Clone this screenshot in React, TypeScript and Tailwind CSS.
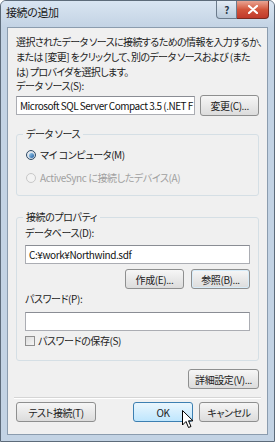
import React from 'react'

const font = "[font-family:'Noto_Sans_CJK_JP','Noto_Sans',sans-serif] [font-feature-settings:'palt'] tracking-[-0.4px]"

function Btn({ label, className = '', hot = false }: { label: string; className?: string; hot?: boolean }) {
  return (
    <div
      className={`h-[20px] flex items-center justify-center rounded-[3px] border text-[10px] text-[#222] whitespace-nowrap ${
        hot
          ? 'border-[#3c7fb1] bg-gradient-to-b from-[#eaf6fd] to-[#bee6fd]'
          : 'border-[#8e8f8f] bg-gradient-to-b from-[#f6f6f6] to-[#dcdcdc]'
      } ${className}`}
    >
      {label}
    </div>
  )
}

function Field({ value = '', className = '' }: { value?: string; className?: string }) {
  return (
    <div className={`h-[19px] bg-white border border-[#abadb3] border-t-[#8a8d94] flex items-center px-[3px] text-[10px] text-[#111] overflow-hidden whitespace-nowrap ${className}`}>
      {value}
    </div>
  )
}

function Group({ title, children, className = '' }: { title: string; children: React.ReactNode; className?: string }) {
  return (
    <div className={`relative border border-[#d5dfe5] rounded-[3px] ${className}`}>
      <div className="absolute -top-[8px] left-[6px] bg-[#f0f0f0] px-[3px] text-[10px] text-[#222] leading-[14px]">{title}</div>
      {children}
    </div>
  )
}

export default function App() {
  return (
    <div className={`w-[275px] h-[442px] ${font} bg-[#c3d3e4] border border-[#5d6b7a] rounded-t-[6px] flex flex-col overflow-hidden`}>
      {/* title bar */}
      <div className="h-[26px] flex items-start justify-between bg-gradient-to-b from-[#d9e5f2] to-[#c3d3e4]">
        <div className="pl-[5px] pt-[3px] text-[11px] text-[#1a1a1a]">接続の追加</div>
        <div className="flex mr-[5px]">
          <div className="w-[21px] h-[18px] border border-[#6b7b8c] border-t-0 rounded-bl-[4px] bg-gradient-to-b from-[#e4ecf5] to-[#b9cadb] flex items-center justify-center text-[10px] font-bold text-[#2a3a4a]">?</div>
          <div className="w-[32px] h-[18px] border border-[#7a2a1f] border-t-0 border-l-0 rounded-br-[4px] bg-gradient-to-b from-[#e8a493] via-[#d2553b] to-[#c0392b] flex items-center justify-center">
            <svg width="10" height="9" viewBox="0 0 10 9">
              <path d="M1 1 L9 8 M9 1 L1 8" stroke="#fff" strokeWidth="2.2" strokeLinecap="round" />
            </svg>
          </div>
        </div>
      </div>

      {/* client area */}
      <div className="mx-[6px] mb-[6px] flex-1 bg-[#f0f0f0] border border-[#8b9cae] flex flex-col px-[8px] pt-[6px] text-[#222]">
        <div className="text-[10px] leading-[15px] tracking-[-0.6px] whitespace-nowrap">
          <div>選択されたデータ ソースに接続するための情報を入力するか、</div>
          <div>または [変更] をクリックして、別のデータ ソースおよび (また</div>
          <div>は) プロバイダを選択します。</div>
        </div>
        <div className="text-[10px] leading-[14px]">データ ソース(S):</div>
        <div className="mt-[2px] flex gap-[5px] items-center">
          <Field value="Microsoft SQL Server Compact 3.5 (.NET F" className="w-[180px] bg-[#f7f7f7] tracking-[-0.5px]" />
          <Btn label="変更(C)..." className="w-[59px] h-[21px]" />
        </div>

        <Group title="データ ソース" className="mt-[18px] h-[62px] flex flex-col pl-[9px] pt-[13px] gap-[9px]">
          <div className="flex items-center gap-[4px] text-[10px] leading-[14px]">
            <span className="w-[10px] h-[10px] rounded-full border border-[#2e4a66] bg-gradient-to-br from-[#e8eef4] to-[#c7d3df] flex items-center justify-center">
              <span className="w-[5px] h-[5px] rounded-full bg-gradient-to-br from-[#9fd1f5] to-[#1e5fa0]" />
            </span>
            マイ コンピュータ(M)
          </div>
          <div className="flex items-center gap-[4px] text-[10px] leading-[14px] text-[#a0a0a0]">
            <span className="w-[10px] h-[10px] rounded-full border border-[#c8c8c8] bg-[#f3f3f3]" />
            ActiveSync に接続したデバイス(A)
          </div>
        </Group>

        <Group title="接続のプロパティ" className="mt-[21px] h-[144px] flex flex-col px-[8px] pt-[8px]">
          <div className="text-[10px] leading-[14px]">データベース(D):</div>
          <Field value="C:¥work¥Northwind.sdf" className="mt-[5px]" />
          <div className="mt-[5px] flex justify-end gap-[7px]">
            <Btn label="作成(E)..." className="w-[59px]" />
            <Btn label="参照(B)..." className="w-[59px] border-[#3c7fb1] shadow-[inset_0_0_0_1px_#d7ecf9]" />
          </div>
          <div className="mt-[3px] text-[10px] leading-[14px]">パスワード(P):</div>
          <Field className="mt-[6px]" />
          <div className="mt-[3px] flex items-center gap-[3px] text-[10px] leading-[14px]">
            <span className="w-[10px] h-[10px] border border-[#8f8f8f] bg-gradient-to-br from-[#dcdcdc] to-[#f5f5f5]" />
            パスワードの保存(S)
          </div>
        </Group>

        <div className="mt-[8px] flex justify-end">
          <Btn label="詳細設定(V)..." className="w-[71px]" />
        </div>
        <div className="mt-[8px] -mx-[2px] border-t border-[#d5d5d5] border-b border-b-white" />
        <div className="mt-[3px] flex items-center">
          <Btn label="テスト接続(T)" className="w-[80px]" />
          <div className="flex-1" />
          <div className="relative">
            <Btn label="OK" hot className="w-[60px]" />
            <svg className="absolute left-[49px] top-[8px]" width="12" height="19" viewBox="0 0 12 19">
              <path d="M0.5 0.5 L0.5 15 L4 11.5 L6.5 17.5 L9 16.5 L6.5 10.8 L11 10.8 Z" fill="#fff" stroke="#000" strokeWidth="1" strokeLinejoin="round" />
            </svg>
          </div>
          <Btn label="キャンセル" className="w-[60px] ml-[6px]" />
        </div>
      </div>
    </div>
  )
}
